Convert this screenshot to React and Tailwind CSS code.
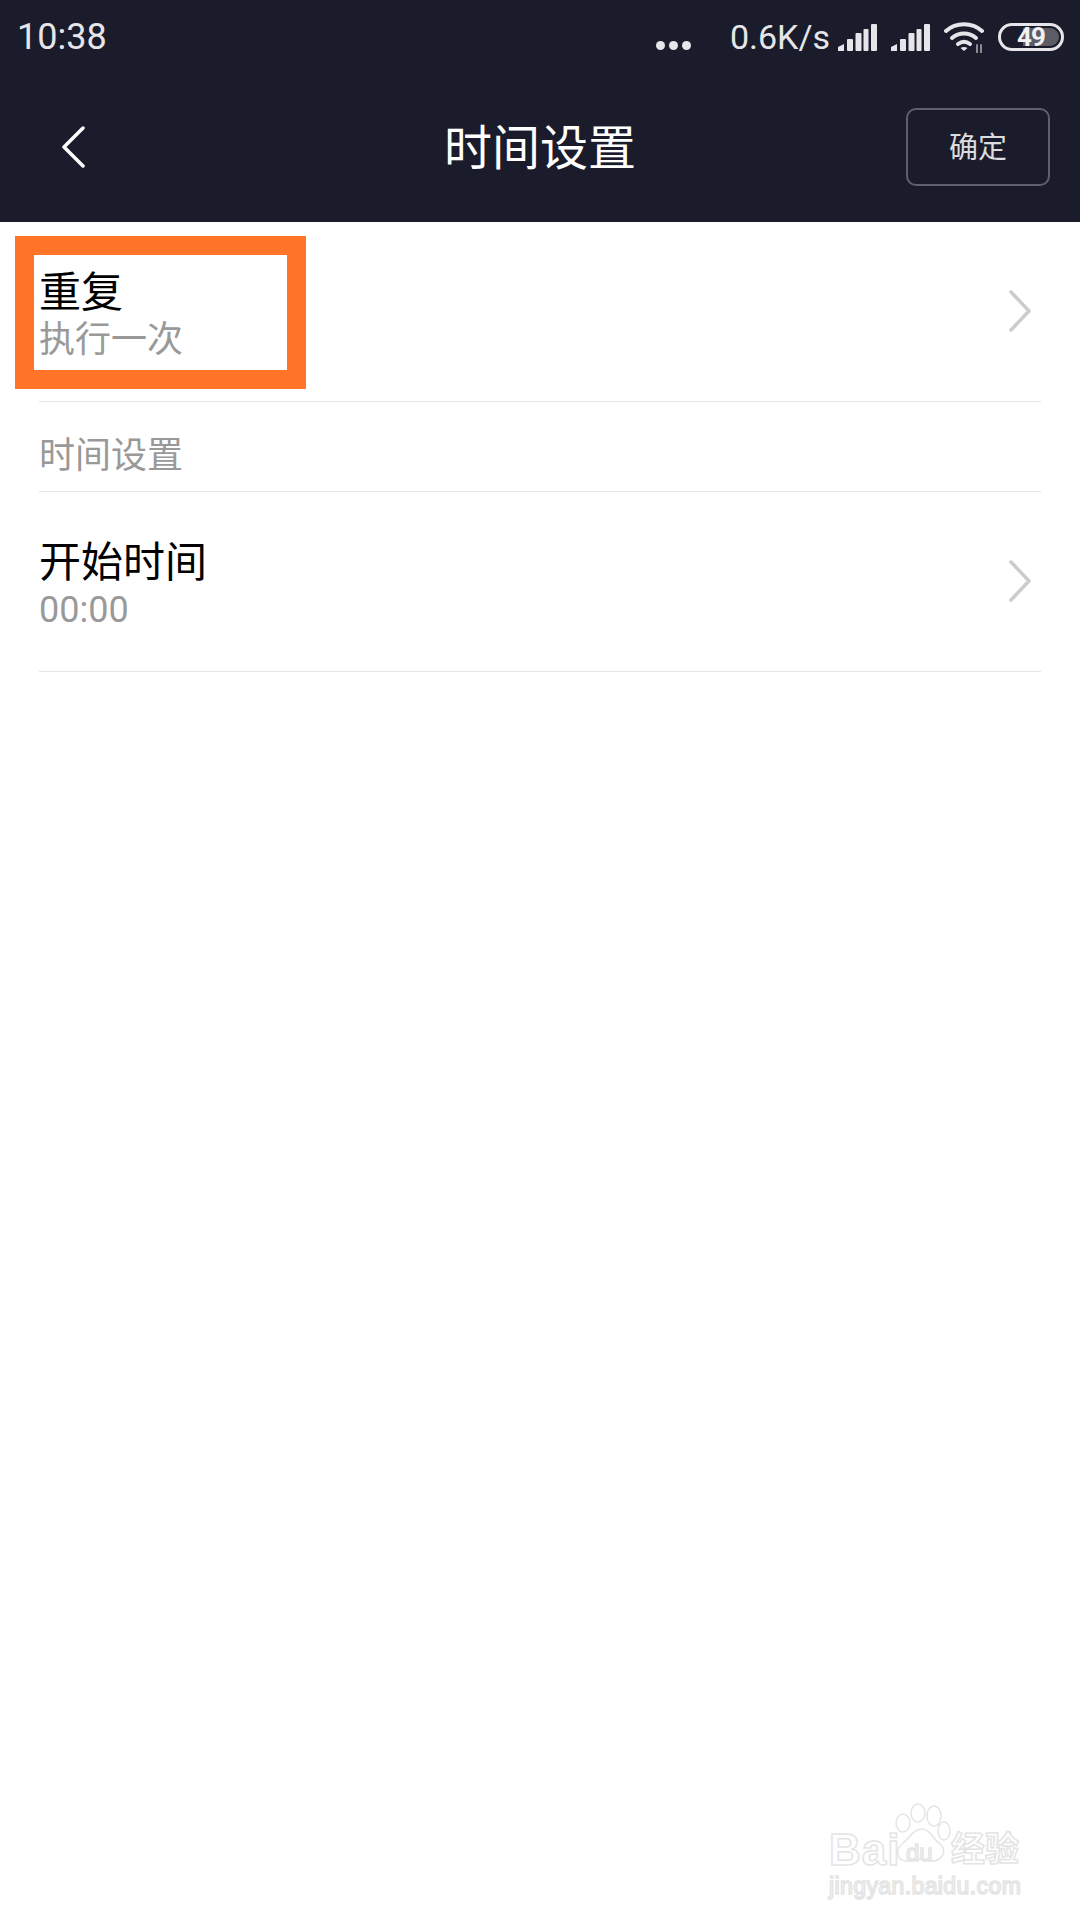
import React from 'react';

function Signal() {
    return (
        <svg width="39" height="27" viewBox="0 0 39 27" fill="#e6e6ea">
            <path d="M0 27V23L6 20V27Z" />
            <rect x="9" y="15" width="6" height="12" rx="1" />
            <rect x="17.500" y="9" width="6" height="18" rx="1" />
            <rect x="25.500" y="5" width="5" height="22" rx="1" />
            <rect x="33" y="0" width="6" height="27" rx="1" />
        </svg>
    );
}

function Wifi() {
    return (
        <svg width="42" height="32" viewBox="0 0 42 32" fill="none" stroke="#e6e6ea" strokeWidth="4" strokeLinecap="round">
            <path d="M2 10C12 1 28 1 38 10" />
            <path d="M8 17C15 11 25 11 32 17" />
            <path d="M14 23C18 20 22 20 26 23" />
            <path d="M20 30L16.500 27C18.500 25.500 21.500 25.500 23.500 27Z" fill="#e6e6ea" stroke="none" />
            <path d="M33 32V24M37 32V24" stroke="#8a8a90" strokeWidth="2" />
        </svg>
    );
}

function Battery() {
    return (
        <div className="relative w-[66px] h-[28px] rounded-full border-[3px] border-[#e6e6ea] flex items-center overflow-hidden">
            <div className="absolute right-[2px] top-[2px] bottom-[2px] w-[36px] rounded-r-full bg-[#5c5c66]" />
            <span className="relative ml-[16px] text-[26px] leading-none font-bold text-[#f0f0f2] tracking-[-1px]">49</span>
        </div>
    );
}

function Chevron() {
    return (
        <svg width="24" height="44" viewBox="0 0 24 44" fill="none" stroke="#cccccc" strokeWidth="3.500" strokeLinecap="round" strokeLinejoin="round" className="mt-[-2px]">
            <path d="M3 3L21 22L3 41" />
        </svg>
    );
}

function Row({ title, value, height }) {
    return (
        <div className={`flex items-center justify-between border-b border-[#e5e5e5] pr-[9px] ${height}`}>
            <div className="flex flex-col pt-[6px]">
                <span className="text-[42px] leading-[50px] text-black">{title}</span>
                <span className="text-[36px] leading-[44px] text-[#999999]">{value}</span>
            </div>
            <Chevron />
        </div>
    );
}

function Watermark() {
    const outline = 'text-white [-webkit-text-stroke:1.500px_#e4e4e4]';
    return (
        <div className="absolute left-[826px] top-[1803px] w-[200px] h-[100px] font-['Liberation_Sans','Noto_Sans_CJK_SC',sans-serif]">
            <svg className="absolute left-[68px] top-0" width="58" height="62" viewBox="0 0 58 62" fill="white" stroke="#e4e4e4" strokeWidth="1.500">
                <ellipse cx="9" cy="20" rx="7" ry="9" />
                <ellipse cx="24" cy="10" rx="7" ry="9" />
                <ellipse cx="40" cy="13" rx="7" ry="10" />
                <ellipse cx="50" cy="28" rx="6" ry="9" />
                <path d="M28 26C36 26 39 36 46 41C54 48 48 58 38 58C33 58 30 56 26 56C21 56 18 58 13 58C3 58 0 47 9 40C16 35 19 26 28 26Z" />
            </svg>
            <span className={`absolute left-[3px] top-[25px] text-[44px] leading-[44px] font-bold tracking-[1px] ${outline}`}>Bai</span>
            <span className={`absolute left-[80px] top-[38px] text-[24px] leading-[24px] ${outline}`}>du</span>
            <span className={`absolute left-[125px] top-[27px] text-[34px] leading-[38px] font-bold ${outline}`}>经验</span>
            <span className={`absolute left-[3px] top-[68px] text-[23px] leading-[30px] tracking-[0.400px] ${outline}`}>jingyan.baidu.com</span>
        </div>
    );
}

export default function App() {
    return (
        <div className="relative w-[1080px] h-[1920px] bg-white overflow-hidden font-['Roboto','Noto_Sans_CJK_SC',sans-serif]">
            <div className="h-[222px] bg-[#1a1c2c] flex flex-col">
                <div className="h-[74px] flex items-center pl-[17px] pr-[16px] text-[#e6e6ea]">
                    <span className="text-[36px] leading-none">10:38</span>
                    <div className="ml-auto flex items-center">
                        <div className="flex gap-[4px] mt-[16px] mr-[39px]">
                            <span className="w-[9px] h-[9px] rounded-full bg-[#e6e6ea]" />
                            <span className="w-[9px] h-[9px] rounded-full bg-[#e6e6ea]" />
                            <span className="w-[9px] h-[9px] rounded-full bg-[#e6e6ea]" />
                        </div>
                        <span className="text-[34px] leading-none mr-[8px]">0.6K/s</span>
                        <div className="flex gap-[14px] mr-[14px]"><Signal /><Signal /></div>
                        <div className="mr-[12px]"><Wifi /></div>
                        <Battery />
                    </div>
                </div>
                <div className="relative flex-1 flex items-center justify-between pl-[61px] pr-[30px] pb-[2px]">
                    <svg width="24" height="44" viewBox="0 0 24 44" fill="none" stroke="white" strokeWidth="3.500" strokeLinecap="round" strokeLinejoin="round">
                        <path d="M22 3L3 22L22 41" />
                    </svg>
                    <span className="absolute left-0 right-0 text-center text-[48px] leading-none text-white pt-[3px]">时间设置</span>
                    <button className="relative w-[144px] h-[78px] rounded-[10px] border-2 border-[#5e606c] text-[29px] text-[#dcdcdf] pt-[4px]">确定</button>
                </div>
            </div>

            <div className="mx-[39px]">
                <Row title="重复" value="执行一次" height="h-[180px]" />
                <div className="h-[90px] flex items-center pt-[18px] border-b border-[#e5e5e5] text-[36px] text-[#999999]">时间设置</div>
                <Row title="开始时间" value="00:00" height="h-[180px]" />
            </div>

            <div className="absolute left-[15px] top-[236px] w-[291px] h-[153px] border-[19px] border-[#ff7427]" />
            <Watermark />
        </div>
    );
}
